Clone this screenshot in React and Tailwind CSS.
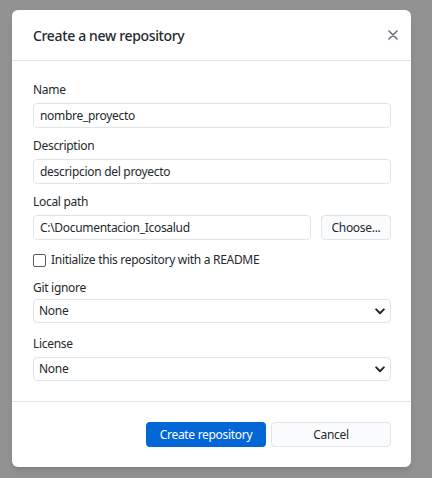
import React from "react";

const FONT = { fontFamily: '"Noto Sans", "Open Sans", sans-serif' };

function Chevron() {
  return (
    <svg width="10" height="7" viewBox="0 0 10 7" className="text-[#24292e]">
      <path d="M1.2 1.4 L5 5.2 L8.8 1.4" fill="none" stroke="currentColor" strokeWidth="2" strokeLinecap="round" strokeLinejoin="round" />
    </svg>
  );
}

function Field({ label, value, className = "" }) {
  return (
    <div className={className}>
      <div className="h-4 leading-4 mb-[5px]">{label}</div>
      <div className="h-[25px] rounded-[4px] border border-[#e1e4e8] bg-white px-[6px] flex items-center">
        {value}
      </div>
    </div>
  );
}

function SelectField({ label, className = "", gap = "mb-[3px]" }) {
  return (
    <div className={className}>
      <div className={`h-4 leading-4 ${gap}`}>{label}</div>
      <div className="h-[24px] rounded-[4px] border border-[#e1e4e8] bg-white pl-[5px] pr-[5px] flex items-center justify-between">
        <span>None</span>
        <Chevron />
      </div>
    </div>
  );
}

export default function App() {
  return (
    <div className="w-[432px] h-[478px] bg-[#929292] pt-[10px] pl-[12px] text-[12px] tracking-[-0.3px] text-[#24292e]" style={FONT}>
      <div className="w-[399px] h-[457px] bg-white rounded-[6px] shadow-md flex flex-col">
        {/* header */}
        <div className="h-[51px] border-b border-[#e1e4e8] flex items-center justify-between pl-[21px] pr-[13px]">
          <h1 className="text-[14px] font-medium tracking-[-0.35px]">Create a new repository</h1>
          <svg width="10" height="10" viewBox="0 0 10 10" className="text-[#6a737d]">
            <path d="M1 1 L9 9 M9 1 L1 9" stroke="currentColor" strokeWidth="1.6" strokeLinecap="round" />
          </svg>
        </div>

        {/* body */}
        <div className="pl-[21px] pr-[20px] pt-[21px] pb-[20px] border-b border-[#e1e4e8]">
          <Field label="Name" value="nombre_proyecto" />
          <Field label="Description" value="descripcion del proyecto" className="mt-[10px]" />
          <div className="mt-[10px]">
            <div className="h-4 leading-4 mb-[5px]">Local path</div>
            <div className="flex gap-[10px]">
              <div className="flex-1 h-[25px] rounded-[4px] border border-[#e1e4e8] px-[6px] flex items-center">
                C:\Documentacion_Icosalud
              </div>
              <button className="w-[70px] h-[25px] rounded-[4px] border border-[#e1e4e8] bg-[#fafbfc] flex items-center justify-center">
                Choose...
              </button>
            </div>
          </div>
          <label className="mt-[13px] flex items-center gap-[5px] h-[14px]">
            <span className="w-[13px] h-[13px] rounded-[2px] border border-[#5a5a5a] bg-white" />
            <span>Initialize this repository with a README</span>
          </label>
          <SelectField label="Git ignore" className="mt-[13px]" />
          <SelectField label="License" className="mt-[13px]" gap="mb-[5px]" />
        </div>

        {/* footer */}
        <div className="flex-1 flex items-center justify-end gap-[5px] pr-[20px]">
          <button className="w-[120px] h-[25px] rounded-[4px] bg-[#0366d6] text-white">Create repository</button>
          <button className="w-[120px] h-[25px] rounded-[4px] border border-[#e1e4e8] bg-[#fafbfc]">Cancel</button>
        </div>
      </div>
    </div>
  );
}
